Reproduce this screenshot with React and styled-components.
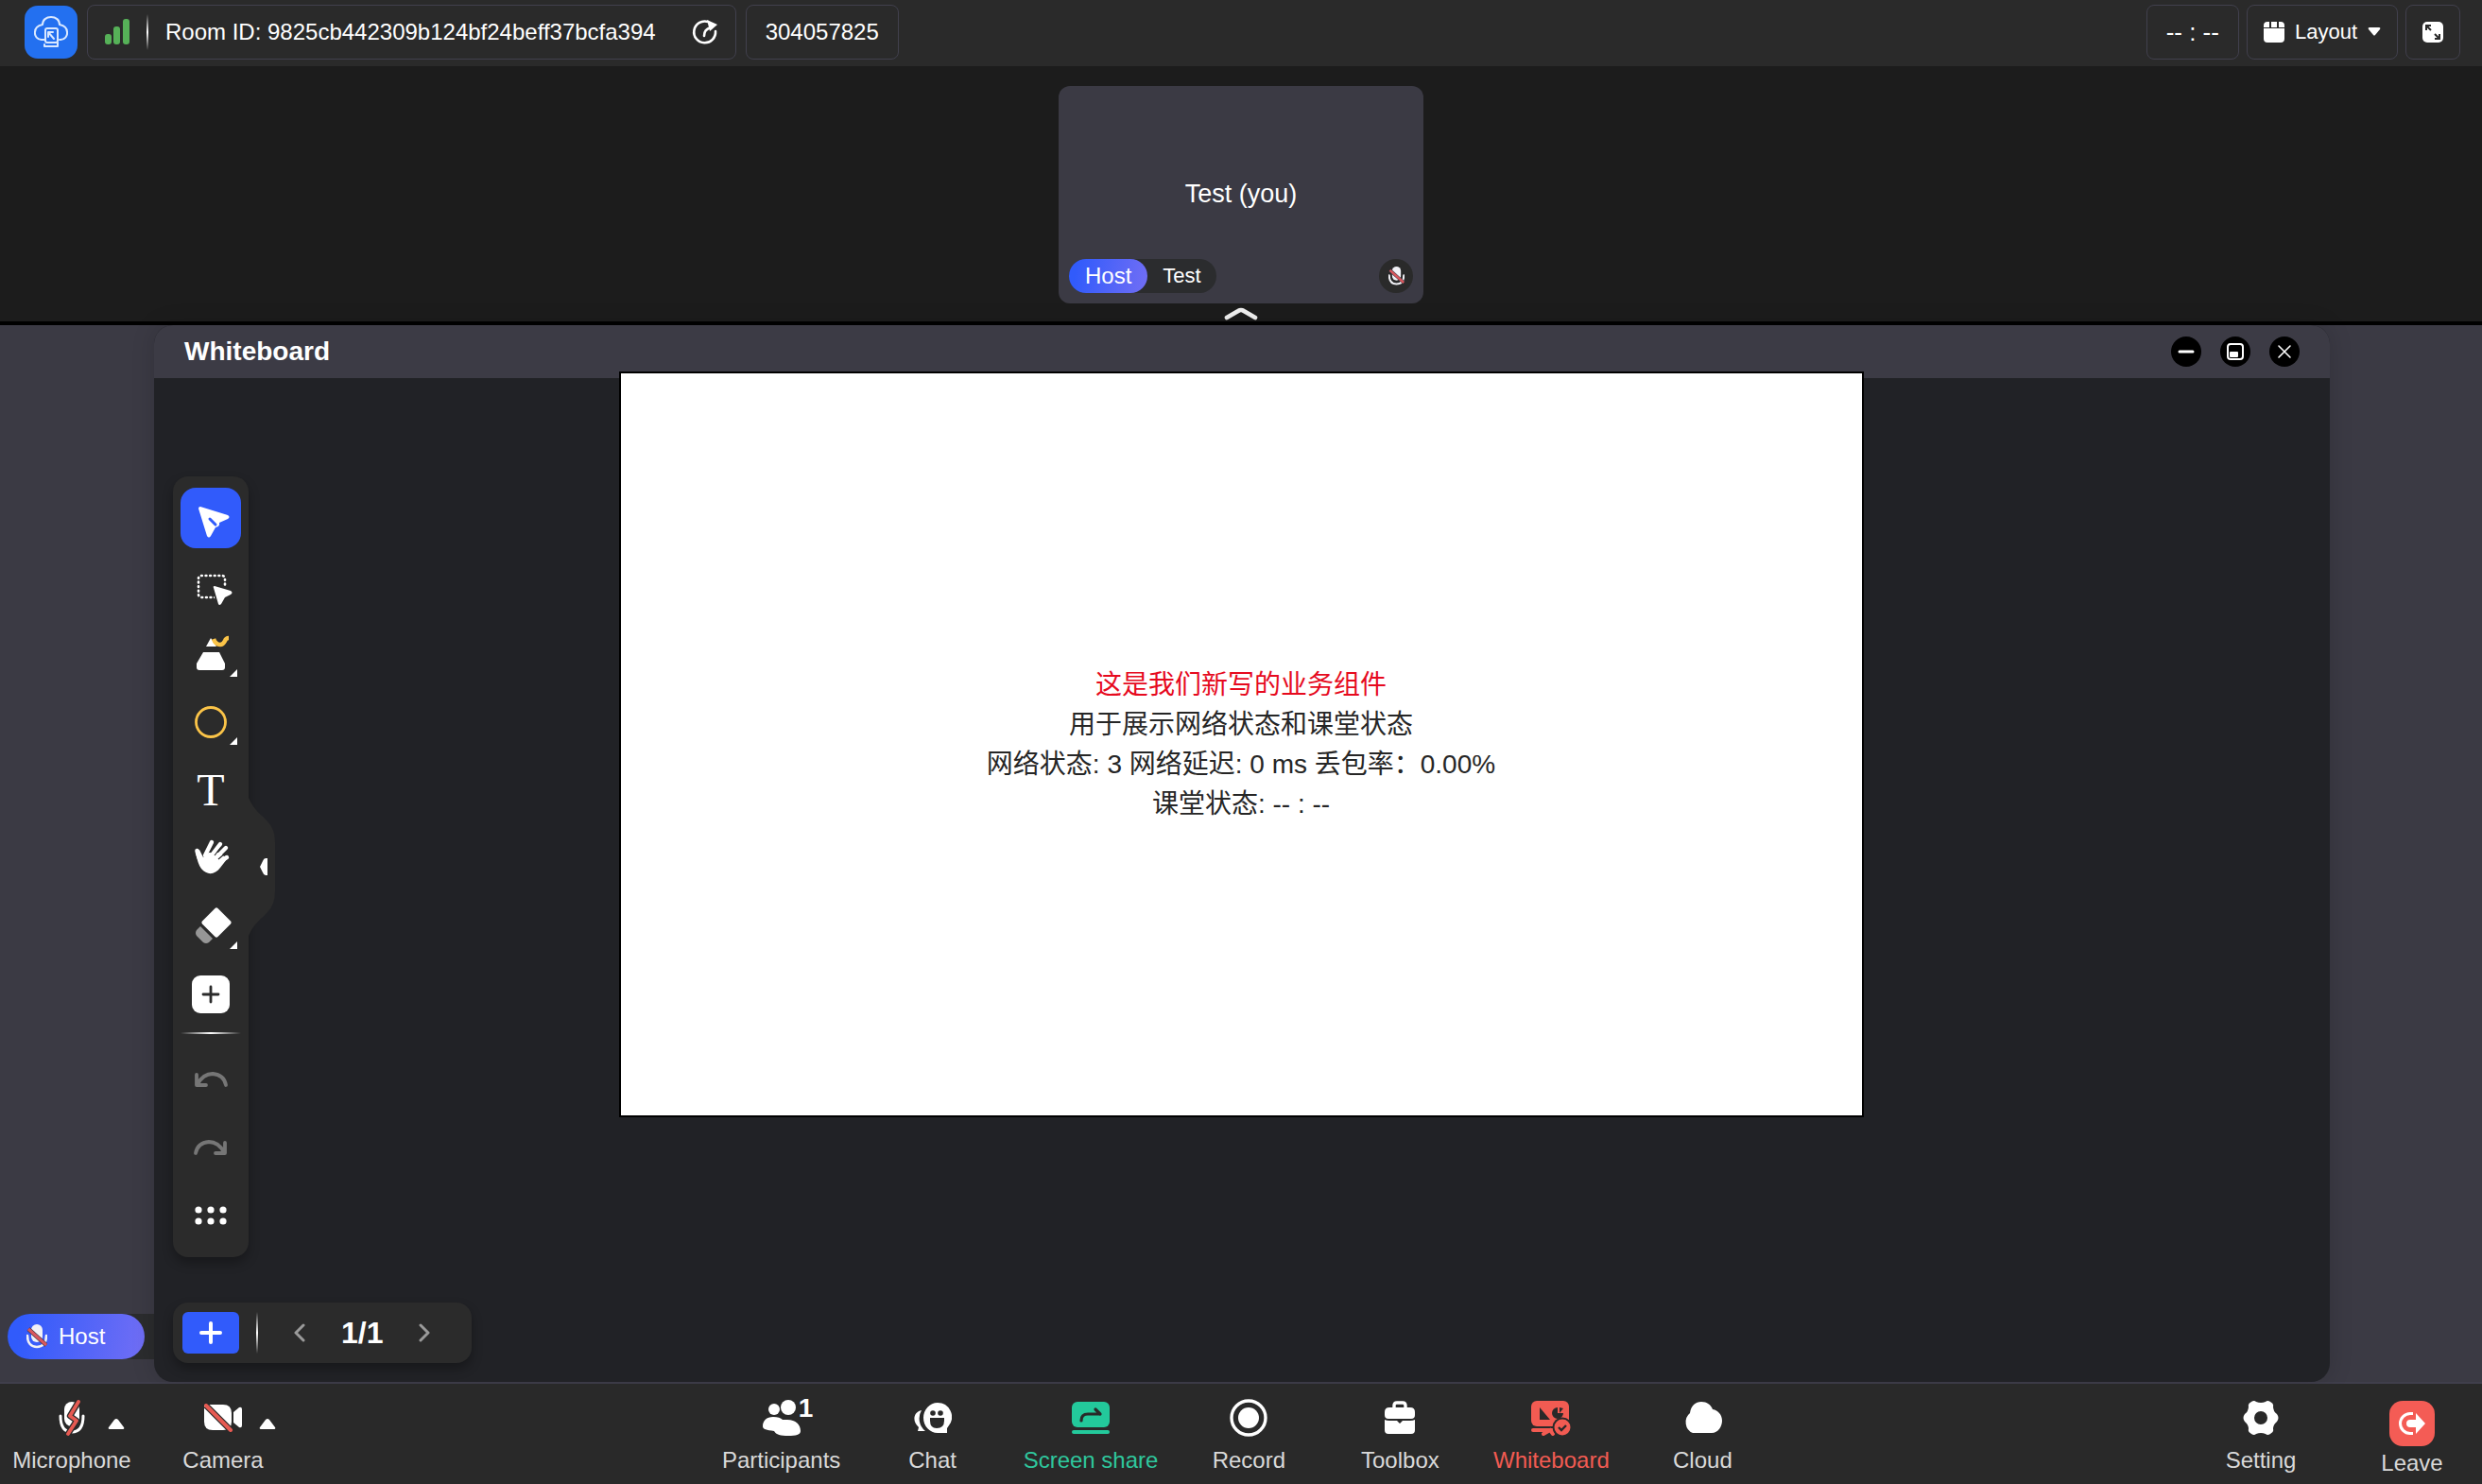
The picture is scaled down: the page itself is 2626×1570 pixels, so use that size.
import React from "react";
import styled, { createGlobalStyle, css } from "styled-components";

const GlobalStyle = createGlobalStyle`
  *, *::before, *::after { box-sizing: border-box; }
  body {
    margin: 0;
    background: #1c1c1c;
    color: #fff;
    font-family: "Liberation Sans", Arial, "Noto Sans CJK SC", sans-serif;
    font-size: 24px;
    line-height: 30px;
  }
  button {
    margin: 0;
    padding: 0;
    border: 0;
    background: none;
    color: inherit;
    font: inherit;
    cursor: pointer;
  }
  svg { display: block; flex: none; }
`;

const Page = styled.div`
  display: flex;
  flex-direction: column;
  min-height: 100vh;
`;

/* ---------- top bar ---------- */

const TopBar = styled.header`
  display: flex;
  align-items: center;
  justify-content: space-between;
  height: 70px;
  padding: 0 23px 2px 26px;
  background: #2a2a2a;
`;

const BarGroup = styled.div`
  display: flex;
  align-items: center;
  gap: ${(p) => p.$gap}px;
`;

const Logo = styled.div`
  display: grid;
  place-items: center;
  width: 56px;
  height: 56px;
  border-radius: 14px;
  background: #2370f0;
`;

const frame = css`
  display: flex;
  align-items: center;
  height: 58px;
  padding: 0 18px;
  border: 1px solid #41404d;
  border-radius: 8px;
`;

const RoomInfo = styled.div`
  ${frame}
  gap: 18px;
`;

const RefreshButton = styled.button`
  margin-left: 20px;
`;

const Chip = styled.div`
  ${frame}
  padding: 0 20px;
`;

const ClockChip = styled(Chip)`
  font-size: 26px;
`;

const BarButton = styled.button`
  ${frame}
  gap: 11px;
  padding: 0 17px;
  font-size: 22px;
`;

const Rule = styled.span`
  width: 2px;
  height: ${(p) => p.$height}px;
  background: linear-gradient(rgba(255, 255, 255, 0), #fff, rgba(255, 255, 255, 0));
`;

/* ---------- camera strip ---------- */

const Strip = styled.section`
  display: flex;
  flex-direction: column;
  align-items: center;
  gap: 4px;
  height: 274px;
  padding-top: 21px;
  border-bottom: 4px solid #000;
  background: #1c1c1c;
`;

const Tile = styled.article`
  display: grid;
  grid-template-rows: 1fr auto;
  width: 386px;
  height: 230px;
  padding: 0 11px 11px;
  border-radius: 12px;
  background: #3b3a44;
`;

const TileName = styled.div`
  align-self: end;
  padding-bottom: 54px;
  font-size: 27px;
  text-align: center;
`;

const TileFoot = styled.div`
  display: flex;
  justify-content: space-between;
`;

const UserTag = styled.div`
  display: flex;
  align-items: center;
  height: 36px;
  padding-right: 16px;
  border-radius: 18px;
  background: #2b2c2e;
  font-size: 22px;
`;

const roleFill = css`
  display: flex;
  align-items: center;
  background: linear-gradient(100deg, #315bfb 10%, #6e6df5 95%);
  font-size: 24px;
`;

const Role = styled.span`
  ${roleFill}
  height: 36px;
  margin-right: 16px;
  padding: 0 17px;
  border-radius: 18px;
`;

const MicDot = styled.span`
  display: grid;
  place-items: center;
  width: 36px;
  height: 36px;
  border-radius: 50%;
  background: #2a2a2a;
`;

/* ---------- whiteboard window ---------- */

const Main = styled.main`
  display: grid;
  grid-template-columns: 163px 1fr 161px;
  flex: 1;
  border-bottom: 2px solid #403f4c;
  background: #3b3a44;
`;

const SideColumn = styled.aside`
  display: flex;
  align-items: flex-end;
  padding: 0 0 24px 8px;
`;

const SideTag = styled.div`
  flex: 1;
  border-radius: 24px 0 0 24px;
  background: #2b2c2e;
`;

const SideRole = styled.div`
  ${roleFill}
  gap: 12px;
  width: 145px;
  height: 48px;
  padding-left: 20px;
  border-radius: 24px;
`;

const BoardWindow = styled.section`
  display: flex;
  flex-direction: column;
  overflow: hidden;
  border-radius: 20px;
  background: #212226;
  box-shadow: 0 0 24px rgba(0, 0, 0, 0.15);
`;

const TitleBar = styled.div`
  display: flex;
  align-items: center;
  justify-content: space-between;
  height: 56px;
  padding: 0 32px;
  background: #3c3b45;
`;

const Title = styled.h1`
  margin: 0;
  font-size: 28px;
  font-weight: 700;
  line-height: 32px;
`;

const WindowButton = styled.button`
  display: grid;
  place-items: center;
  width: 32px;
  height: 32px;
  border-radius: 50%;
  background: #000;
`;

const Board = styled.div`
  display: flex;
  flex: 1;
  flex-direction: column;
  align-items: flex-start;
  justify-content: flex-end;
  gap: 48px;
  padding: 20px;
`;

const Toolbar = styled.div`
  position: relative;
  display: flex;
  flex-direction: column;
  align-items: center;
  gap: 8px;
  width: 80px;
  padding: 12px 8px;
  border-radius: 16px;
  background: #2b2b2b;
  box-shadow: 0 6px 12px rgba(0, 0, 0, 0.3);
`;

const ToolButton = styled.button`
  width: 64px;
  height: 64px;
  border-radius: 16px;
  background: ${(p) => (p.$active ? "#315bfb" : "transparent")};
`;

const TextTool = styled(ToolButton)`
  font-family: "Liberation Serif", "Times New Roman", serif;
  font-size: 48px;
  line-height: 64px;
`;

const ToolRule = styled.span`
  align-self: stretch;
  height: 2px;
  margin-bottom: 8px;
  background: linear-gradient(90deg, rgba(255, 255, 255, 0), #fff, rgba(255, 255, 255, 0));
`;

const Handle = styled.button`
  position: absolute;
  top: 50%;
  left: 100%;
  transform: translateY(-50%);
`;

const Pager = styled.nav`
  display: flex;
  align-items: center;
  width: 316px;
  height: 64px;
  padding: 0 10px;
  border-radius: 16px;
  background: #2b2b2b;
  box-shadow: 0 6px 12px rgba(0, 0, 0, 0.3);
`;

const AddPage = styled.button`
  display: grid;
  place-items: center;
  width: 60px;
  height: 44px;
  margin-right: 18px;
  border-radius: 6px;
  background: #315bfb;
`;

const PageNav = styled.div`
  display: flex;
  align-items: center;
  gap: 38px;
  margin-left: 38px;
`;

const PageCount = styled.span`
  font-size: 32px;
  font-weight: 700;
`;

/* ---------- status widget floating above the board ---------- */

const WidgetLayer = styled.div`
  position: absolute;
  inset: 0;
  display: flex;
  justify-content: center;
  padding-top: 393px;
  pointer-events: none;
`;

const Widget = styled.section`
  display: flex;
  flex-direction: column;
  align-items: center;
  justify-content: center;
  width: calc(50% + 4px);
  height: calc(50vh + 4px);
  border: 2px solid #000;
  background: #fff;
  color: #262626;
  font-size: 28px;
  line-height: 42px;
`;

const Line = styled.div`
  color: ${(p) => (p.$alert ? "#e60a1e" : "inherit")};
`;

/* ---------- bottom bar ---------- */

const Dock = styled.footer`
  display: grid;
  grid-template-columns: 1fr auto 1fr;
  height: 106px;
  padding: 0 10px 0 12px;
  background: #292929;
`;

const DockGroup = styled.div`
  display: flex;
  justify-content: ${(p) => (p.$end ? "flex-end" : "flex-start")};
  gap: 32px;
`;

const DeviceItem = styled.div`
  display: grid;
  grid-template-columns: 40px 48px 40px;
  align-content: start;
  padding-top: 12px;
`;

const DockButton = styled.button`
  display: flex;
  flex-direction: column;
  align-items: center;
  gap: ${(p) => (p.$low ? 3 : 6)}px;
  min-width: 128px;
  padding-top: ${(p) => (p.$low ? 18 : 12)}px;
  color: ${(p) => p.$color || "#d9d9d9"};
`;

const DeviceButton = styled(DockButton)`
  grid-area: 1 / 1 / 2 / 4;
  padding-top: 0;
`;

const CaretButton = styled.button`
  grid-area: 1 / 3;
  place-self: start;
  z-index: 1;
  width: 40px;
  height: 36px;
  padding: 24px 0 0 14px;
`;

const IconBox = styled.span`
  position: relative;
  display: grid;
  place-items: center;
  width: 48px;
  height: 48px;
  border-radius: 14px;
  background: ${(p) => p.$fill || "transparent"};
`;

const Badge = styled.span`
  position: absolute;
  top: 0;
  left: 42px;
  color: #fff;
  font-size: 28px;
  font-weight: 700;
  line-height: 28px;
`;

/* ---------- icons ---------- */

const Svg = ({ w, h = w, children }) => (
  <svg width={w} height={h} viewBox={`0 0 ${w} ${h}`} fill="none" aria-hidden="true">
    {children}
  </svg>
);

const LogoIcon = () => (
  <Svg w={36}>
    <g stroke="#d9e8ff" strokeWidth="2" strokeLinecap="round" strokeLinejoin="round">
      <path d="M12 26H8a7 7 0 0 1-7-8c0-4 3-7 8-8C9 5 13 2 18 2s9 3 9 8c5 1 8 4 8 8a7 7 0 0 1-7 8h-1" />
      <rect x="12" y="14" width="13" height="15" rx="2" />
      <path d="M15 18h5M15 18v5M15 18l6 7M11 33h14M25 29v4M11 31v2" />
    </g>
  </Svg>
);

const SignalIcon = () => (
  <Svg w={26} h={28}>
    <g fill="#56b158">
      <rect x="0" y="16" width="7" height="11" rx="3" />
      <rect x="9" y="8" width="7" height="19" rx="3" />
      <rect x="19" y="0" width="7" height="27" rx="3" />
    </g>
  </Svg>
);

const RefreshIcon = () => (
  <Svg w={28}>
    <g stroke="#fff" strokeWidth="2.6" strokeLinecap="round">
      <path d="M17 3A11.4 11.4 0 1 0 25 13" />
      <path d="M13 18c0-5 2-7 7-9" />
    </g>
    <path d="M16 1l11 5-8 7z" fill="#fff" />
  </Svg>
);

const LayoutIcon = () => (
  <Svg w={22}>
    <path d="M4 0h2v6H0V4a4 4 0 0 1 4-4zM8 0h6v6H8zM16 0h2a4 4 0 0 1 4 4v2h-6zM0 7h22v11a4 4 0 0 1-4 4H4a4 4 0 0 1-4-4z" fill="#fff" />
  </Svg>
);

const DownIcon = () => (
  <Svg w={14} h={10}>
    <path d="M2 0h10q2 0 1 2L8 8q-1 1-2 0L1 2Q0 0 2 0z" fill="#fff" />
  </Svg>
);

const FullscreenIcon = () => (
  <Svg w={22}>
    <rect width="22" height="22" rx="5" fill="#fff" />
    <path d="M4 9V4h5M4 4l5 5M18 13v5h-5M18 18l-5-5" stroke="#2a2a2a" strokeWidth="2" />
  </Svg>
);

const MutedMic = ({ w }) => (
  <svg width={w} height={(w * 26) / 22} viewBox="0 0 22 26" fill="none" aria-hidden="true">
    <rect x="5" y="0" width="12" height="19" rx="6" fill="#f1f1f6" />
    <path d="M1 12c0 8 4 12 10 12s10-4 10-12" stroke="#f1f1f6" strokeWidth="2.6" strokeLinecap="round" />
    <path d="M2 5l19 17" stroke="#3a3a4a" strokeWidth="4.4" />
    <path d="M2 5l19 17" stroke="#d9575c" strokeWidth="3.2" />
  </svg>
);

const CollapseIcon = () => (
  <Svg w={36} h={14}>
    <path d="M3 11L15 4q3-2 6 0l12 7" stroke="#f0f0f0" strokeWidth="4.6" strokeLinecap="round" />
  </Svg>
);

const MinimizeIcon = () => (
  <Svg w={20}>
    <path d="M3 10h14" stroke="#fff" strokeWidth="3" strokeLinecap="round" />
  </Svg>
);

const RestoreIcon = () => (
  <Svg w={20}>
    <rect x="2" y="2" width="16" height="16" rx="3" stroke="#fff" strokeWidth="2" />
    <rect x="4" y="10" width="9" height="6" rx="1" fill="#fff" />
  </Svg>
);

const CloseIcon = () => (
  <Svg w={20}>
    <path d="M4 4l12 12M16 4L4 16" stroke="#fff" strokeWidth="1.6" strokeLinecap="round" />
  </Svg>
);

const Corner = () => <path d="M60 48v8h-8z" fill="#fff" />;

const CursorIcon = () => (
  <Svg w={64}>
    <path d="M21 20l29 9q3 2 0 4l-9 4q1 4-4 5l-5 9q-2 3-4 0L19 22q0-2 2-2z" fill="#fff" />
    <path d="M31 33l6 6" stroke="#315bfb" strokeWidth="3" strokeLinecap="round" />
  </Svg>
);

const MarqueeIcon = () => (
  <Svg w={64}>
    <rect x="19" y="21" width="28" height="23" rx="3" stroke="#fff" strokeWidth="2.6" strokeDasharray="0.8 3.8" strokeLinecap="round" />
    <path d="M33 32h31v24H39z" fill="#2b2b2b" />
    <path d="M36 32l17 5q3 2 0 4l-6 3-4 7q-2 2-3 0l-5-17q-1-2 1-2z" fill="#fff" />
  </Svg>
);

const PenIcon = () => (
  <Svg w={64}>
    <path d="M32 15l6 9H27z" fill="#fff" />
    <path d="M24 30h17l6 12v4q0 3-3 3H20q-3 0-3-3v-4z" fill="#fff" />
    <path d="M35 16q2 6 7 6 3 0 5-4 1-3 4-3" stroke="#fbc448" strokeWidth="4.5" />
    <Corner />
  </Svg>
);

const CircleIcon = () => (
  <Svg w={64}>
    <circle cx="32" cy="32" r="15.5" stroke="#fbc448" strokeWidth="2.8" />
    <Corner />
  </Svg>
);

const HandIcon = () => (
  <Svg w={64}>
    <g stroke="#fff" strokeLinecap="round">
      <path d="M26 29L33 15M32 30L42 17M36 33l12-12M37 38l12-7" strokeWidth="4.4" />
      <path d="M17.5 24q2 9 5 12" strokeWidth="4.6" />
    </g>
    <path d="M16 25q2 13 6 18c6 7 14 7 20-1l7-9-7-7H30l-6 5-4-8z" fill="#fff" />
    <path d="M31 26l5-8M36 29l7-9M40 33l7-6" stroke="#2b2b2b" strokeWidth="1.2" />
  </Svg>
);

const EraserIcon = () => (
  <Svg w={64}>
    <path d="M36.5 13q1.500-1.500 3 0L53 26.500q1.500 1.500 0 3L39.500 43q-1.500 1.500-3 0L23 29.500q-1.500-1.500 0-3z" fill="#fff" />
    <path d="M21 32l13 13-4 4q-3 2-6 0l-7-7q-2-3 0-6z" fill="#969696" />
    <Corner />
  </Svg>
);

const AddToolIcon = () => (
  <Svg w={64}>
    <rect x="12" y="12" width="40" height="40" rx="9" fill="#fff" />
    <path d="M24 32h16M32 24v16" stroke="#2b2b2b" strokeWidth="2.8" strokeLinecap="round" />
  </Svg>
);

const UndoIcon = () => (
  <Svg w={64}>
    <path d="M17 27v11h10M18 37q6-11 16-11 12 1 14 12" stroke="#767676" strokeWidth="3.8" strokeLinecap="round" strokeLinejoin="round" />
  </Svg>
);

const RedoIcon = () => (
  <Svg w={64}>
    <path d="M47 27v11H37M46 37q-6-11-16-11-12 1-14 12" stroke="#767676" strokeWidth="3.8" strokeLinecap="round" strokeLinejoin="round" />
  </Svg>
);

const DotsIcon = () => (
  <Svg w={64}>
    <g fill="#fff">
      {[19, 32, 45].map((x) =>
        [26, 38].map((y) => <circle key={`${x}-${y}`} cx={x} cy={y} r="3.6" />)
      )}
    </g>
  </Svg>
);

const HandleIcon = () => (
  <Svg w={28} h={146}>
    <path d="M0 0c6 14 14 18 20 25q8 8 8 22v52q0 14-8 22c-6 7-14 11-20 25z" fill="#2b2b2b" />
    <path d="M20 64h-2q-2 0-3 3l-3 6 3 6q1 3 3 3h2z" fill="#fff" />
  </Svg>
);

const Chevron = ({ d }) => (
  <Svg w={12} h={20}>
    <path d={d} stroke="#9a9a9a" strokeWidth="3" strokeLinecap="round" strokeLinejoin="round" />
  </Svg>
);

const PlusIcon = () => (
  <Svg w={24}>
    <path d="M2 12h20M12 2v20" stroke="#fff" strokeWidth="4" strokeLinecap="round" />
  </Svg>
);

const UpIcon = () => (
  <Svg w={18} h={11}>
    <path d="M1 9L7 1q2-2 4 0l6 8q1 2-1 2H2q-2 0-1-2z" fill="#fff" />
  </Svg>
);

const MicOffIcon = () => (
  <Svg w={28} h={38}>
    <rect x="6" y="2" width="16" height="26" rx="8" fill="#fff" />
    <path d="M2 17c0 11 4 17 12 17s12-6 12-17" stroke="#fff" strokeWidth="3" strokeLinecap="round" />
    <path d="M21 2L12 17l7 5-9 14" stroke="#292929" strokeWidth="6.4" strokeLinejoin="round" />
    <path d="M21 2L12 17l7 5-9 14" stroke="#e65a52" strokeWidth="3.8" strokeLinecap="round" strokeLinejoin="round" />
  </Svg>
);

const CameraOffIcon = () => (
  <Svg w={40} h={30}>
    <path d="M0 1h20q9 0 9 9v9q0 9-9 9H9q-9 0-9-9z" fill="#fff" />
    <path d="M31 9l6-5q3-1 3 2v17q0 3-3 2l-6-5z" fill="#fff" />
    <path d="M2 2l26 26" stroke="#292929" strokeWidth="6.5" />
    <path d="M2 2l26 26" stroke="#e65a52" strokeWidth="4" strokeLinecap="round" />
  </Svg>
);

const PeopleIcon = () => (
  <Svg w={40}>
    <g fill="#fff">
      <circle cx="12" cy="11" r="6" />
      <circle cx="27" cy="9" r="8" />
      <path d="M0 29c0-6 4-10 11-10 5 0 8 1 10 3h5c9 0 14 5 14 12 0 4-5 5-13 5s-13-1-15-5C4 33 0 32 0 29z" />
    </g>
  </Svg>
);

const ChatIcon = () => (
  <Svg w={40} h={32}>
    <path d="M8 8a17 17 0 0 0 4 22H4l1-4C-2 20-1 10 8 8z" fill="#fff" />
    <path d="M25 0a15 15 0 0 1 12 24l-2 3v5H25a15 16 0 0 1 0-32z" fill="#fff" />
    <circle cx="20" cy="11" r="2.8" fill="#292929" />
    <circle cx="28" cy="11" r="2.8" fill="#292929" />
    <path d="M17 16h15v3q0 8-8 8-7 0-7-8z" fill="#292929" />
  </Svg>
);

const ShareIcon = () => (
  <Svg w={40} h={34}>
    <rect width="40" height="27" rx="6" fill="#23c99b" />
    <rect y="30" width="40" height="4" rx="2" fill="#23c99b" />
    <path d="M10 20q0-7 7-7h13M25 8l5 5" stroke="#292929" strokeWidth="3.2" strokeLinecap="round" />
  </Svg>
);

const RecordIcon = () => (
  <Svg w={40}>
    <circle cx="20" cy="20" r="18" stroke="#fff" strokeWidth="3.4" />
    <circle cx="20" cy="20" r="11" fill="#fff" />
  </Svg>
);

const ToolboxIcon = () => (
  <Svg w={32} h={36}>
    <path d="M10 7V5q0-3 3-3h6q3 0 3 3v2" stroke="#fff" strokeWidth="3.4" />
    <path d="M5 7h22q5 0 5 5v3q0 4-4 4H4q-4 0-4-4v-3q0-5 5-5z" fill="#fff" />
    <path d="M0 20q2 1 5 1h8l3 3 3-3h8q3 0 5-1v11q0 4-4 4H4q-4 0-4-4z" fill="#fff" />
  </Svg>
);

const BoardIcon = () => (
  <Svg w={42} h={38}>
    <rect x="0" y="1" width="40" height="27" rx="6" fill="#f25b52" />
    <path d="M2 32h22M13 36l7-4 3 4" stroke="#f25b52" strokeWidth="4" strokeLinecap="round" />
    <path d="M9 8v13h11z" fill="#292929" />
    <path d="M28 8a6 6 0 1 0 6 6h-6z" fill="#292929" />
    <path d="M30 8l4 1-4 5z" fill="#292929" />
    <circle cx="33" cy="29" r="10.5" fill="#292929" />
    <circle cx="33" cy="29" r="8.5" fill="#f25b52" />
    <path d="M29 29l3 3 5-5" stroke="#292929" strokeWidth="2.4" />
  </Svg>
);

const CloudIcon = () => (
  <Svg w={44} h={34}>
    <path d="M12 33a11 12 0 0 1-3-21C10 4 15 0 21 0s10 3 12 8c6 1 10 6 10 12s-4 13-11 13z" fill="#fff" />
  </Svg>
);

const SettingIcon = () => (
  <Svg w={38} h={36}>
    <path fillRule="evenodd" fill="#fff" d="M9 1q3-2 5 0 5 2 10 0 2-2 5 0 4 2 3 5 0 5 4 8 3 4 0 8-4 3-4 8 1 3-3 5-3 2-5 0-5-2-10 0-2 2-5 0-4-2-3-5 0-5-4-8-3-4 0-8 4-3 4-8-1-3 3-5zM19 11a7 7 0 1 0 0 14 7 7 0 0 0 0-14z" />
  </Svg>
);

const LeaveIcon = () => (
  <Svg w={28} h={24}>
    <path d="M15 1.500h-3a10.500 10.500 0 0 0 0 21h3" stroke="#fff" strokeWidth="3" />
    <path d="M12 8h6V1l10 11-10 11v-7h-6a4 4 0 0 1 0-8z" fill="#fff" />
  </Svg>
);

/* ---------- data ---------- */

const tools = [
  { name: "Clicker", icon: <CursorIcon />, active: true },
  { name: "Selector", icon: <MarqueeIcon /> },
  { name: "Pencil", icon: <PenIcon /> },
  { name: "Shape", icon: <CircleIcon /> },
  { name: "Text", text: "T" },
  { name: "Hand", icon: <HandIcon /> },
  { name: "Eraser", icon: <EraserIcon /> },
  { name: "Add", icon: <AddToolIcon /> },
];

const history = [
  { name: "Undo", icon: <UndoIcon /> },
  { name: "Redo", icon: <RedoIcon /> },
  { name: "More", icon: <DotsIcon /> },
];

const devices = [
  { name: "Microphone", icon: <MicOffIcon /> },
  { name: "Camera", icon: <CameraOffIcon /> },
];

const actions = [
  { name: "Participants", icon: <PeopleIcon />, badge: 1 },
  { name: "Chat", icon: <ChatIcon /> },
  { name: "Screen share", icon: <ShareIcon />, color: "#2fc79d" },
  { name: "Record", icon: <RecordIcon /> },
  { name: "Toolbox", icon: <ToolboxIcon /> },
  { name: "Whiteboard", icon: <BoardIcon />, color: "#f25b52" },
  { name: "Cloud", icon: <CloudIcon /> },
];

export default function App() {
  return (
    <Page>
      <GlobalStyle />
      <TopBar>
        <BarGroup $gap={10}>
          <Logo><LogoIcon /></Logo>
          <RoomInfo>
            <SignalIcon />
            <Rule $height={38} />
            <span>Room ID: 9825cb442309b124bf24beff37bcfa394</span>
            <RefreshButton aria-label="Refresh"><RefreshIcon /></RefreshButton>
          </RoomInfo>
          <Chip>304057825</Chip>
        </BarGroup>
        <BarGroup $gap={8}>
          <ClockChip>-- : --</ClockChip>
          <BarButton>
            <LayoutIcon />
            Layout
            <DownIcon />
          </BarButton>
          <BarButton aria-label="Fullscreen"><FullscreenIcon /></BarButton>
        </BarGroup>
      </TopBar>

      <Strip>
        <Tile>
          <TileName>Test (you)</TileName>
          <TileFoot>
            <UserTag><Role>Host</Role>Test</UserTag>
            <MicDot><MutedMic w={17} /></MicDot>
          </TileFoot>
        </Tile>
        <button aria-label="Collapse"><CollapseIcon /></button>
      </Strip>

      <Main>
        <SideColumn>
          <SideTag>
            <SideRole><MutedMic w={22} />Host</SideRole>
          </SideTag>
        </SideColumn>
        <BoardWindow>
          <TitleBar>
            <Title>Whiteboard</Title>
            <BarGroup $gap={20}>
              <WindowButton aria-label="Minimize"><MinimizeIcon /></WindowButton>
              <WindowButton aria-label="Restore"><RestoreIcon /></WindowButton>
              <WindowButton aria-label="Close"><CloseIcon /></WindowButton>
            </BarGroup>
          </TitleBar>
          <Board>
            <Toolbar role="toolbar">
              {tools.map((t) =>
                t.text ? (
                  <TextTool key={t.name} aria-label={t.name}>{t.text}</TextTool>
                ) : (
                  <ToolButton key={t.name} aria-label={t.name} $active={t.active}>{t.icon}</ToolButton>
                )
              )}
              <ToolRule />
              {history.map((t) => (
                <ToolButton key={t.name} aria-label={t.name}>{t.icon}</ToolButton>
              ))}
              <Handle aria-label="Hide toolbar"><HandleIcon /></Handle>
            </Toolbar>
            <Pager>
              <AddPage aria-label="Add page"><PlusIcon /></AddPage>
              <Rule $height={44} />
              <PageNav>
                <button aria-label="Previous page"><Chevron d="M10 2L2 10l8 8" /></button>
                <PageCount>1/1</PageCount>
                <button aria-label="Next page"><Chevron d="M2 2l8 8-8 8" /></button>
              </PageNav>
            </Pager>
          </Board>
        </BoardWindow>
      </Main>

      <Dock>
        <DockGroup>
          {devices.map((d) => (
            <DeviceItem key={d.name}>
              <DeviceButton>
                <IconBox>{d.icon}</IconBox>
                {d.name}
              </DeviceButton>
              <CaretButton aria-label={`${d.name} options`}><UpIcon /></CaretButton>
            </DeviceItem>
          ))}
        </DockGroup>
        <DockGroup>
          {actions.map((a) => (
            <DockButton key={a.name} $color={a.color}>
              <IconBox>
                {a.icon}
                {a.badge && <Badge>{a.badge}</Badge>}
              </IconBox>
              {a.name}
            </DockButton>
          ))}
        </DockGroup>
        <DockGroup $end>
          <DockButton>
            <IconBox><SettingIcon /></IconBox>
            Setting
          </DockButton>
          <DockButton $low>
            <IconBox $fill="#f45c55"><LeaveIcon /></IconBox>
            Leave
          </DockButton>
        </DockGroup>
      </Dock>

      <WidgetLayer>
        <Widget>
          <Line $alert>这是我们新写的业务组件</Line>
          <Line>用于展示网络状态和课堂状态</Line>
          <Line>网络状态: 3 网络延迟: 0 ms 丢包率：0.00%</Line>
          <Line>课堂状态: -- : --</Line>
        </Widget>
      </WidgetLayer>
    </Page>
  );
}
